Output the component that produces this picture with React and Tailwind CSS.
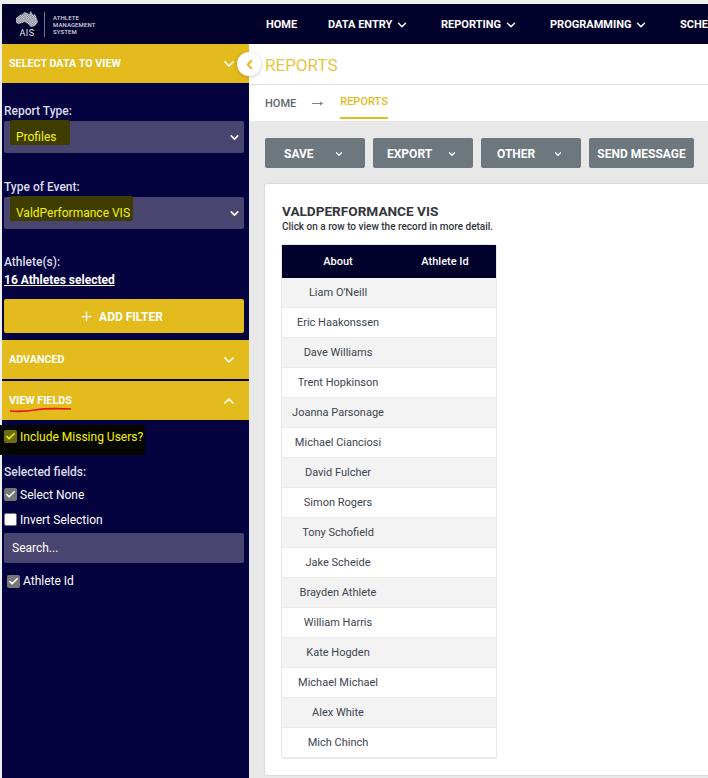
import React from 'react';
import { ChevronDown, ChevronUp, ChevronLeft, Plus, Check } from 'lucide-react';

const athletes = [
  "Liam O'Neill",
  'Eric Haakonssen',
  'Dave Williams',
  'Trent Hopkinson',
  'Joanna Parsonage',
  'Michael Cianciosi',
  'David Fulcher',
  'Simon Rogers',
  'Tony Schofield',
  'Jake Scheide',
  'Brayden Athlete',
  'William Harris',
  'Kate Hogden',
  'Michael Michael',
  'Alex White',
  'Mich Chinch',
];

const head = "font-['Roboto',sans-serif] font-bold";

const Logo = () => (
  <div className="flex items-center w-[247px] pl-[13px]">
    <div className="flex flex-col items-center w-[24px] pt-[1px]">
      <svg width="22" height="16" viewBox="0 0 22 16">
        <defs>
          <pattern id="chk" width="2.4" height="2.4" patternUnits="userSpaceOnUse">
            <rect width="2.4" height="2.4" fill="#55556f" />
            <rect width="1.2" height="1.2" fill="#ffffff" />
            <rect x="1.2" y="1.2" width="1.2" height="1.2" fill="#ffffff" />
          </pattern>
        </defs>
        <path d="M0 7 L4 4 L7 3 L8 1 L11 2 L13 3 L15 0 L17 4 L19 3 L21 8 L22 11 L19 15 L15 16 L12 13 L9 11 L3 13 L0 12 Z" fill="url(#chk)" />
      </svg>
      <span className="text-[9px] leading-[10px] tracking-[0.5px] text-[#e6e6ee] font-['Roboto',sans-serif] mt-[1px]">AIS</span>
    </div>
    <div className="w-px h-[25px] bg-[#77778f] ml-[5px] mr-[8px]"></div>
    <div className="text-[6px] leading-[7px] tracking-[0.1px] text-[#d8d8e4] font-['Roboto',sans-serif] font-medium">
      <div>ATHLETE</div>
      <div>MANAGEMENT</div>
      <div>SYSTEM</div>
    </div>
  </div>
);

const NavItem = ({ label, caret, className = '' }) => (
  <div className={`flex items-center gap-[3px] pt-[2px] text-white text-[11px] whitespace-nowrap ${head} ${className}`}>
    {label}
    {caret && <ChevronDown size={14} strokeWidth={2.5} />}
  </div>
);

const Section = ({ label, open, mark }) => (
  <div className="relative h-[39px] bg-[#e3bb1c] flex items-center justify-between pl-[7px] pr-[12px] text-white">
    <span className={`pt-[2px] text-[10.75px] ${head}`}>{label}</span>
    {open ? <ChevronUp size={16} strokeWidth={2.5} /> : <ChevronDown size={16} strokeWidth={2.5} />}
    {mark && (
      <svg className="absolute left-[7px] top-[26px]" width="64" height="6" viewBox="0 0 64 6">
        <path d="M1 4 Q14 5 26 3 T62 2" stroke="#e8131b" strokeWidth="1.6" fill="none" />
      </svg>
    )}
  </div>
);

const Select = ({ value, markWidth }) => (
  <div className="relative h-8 ml-[2px] mr-[5px] rounded-[2px] bg-[#4a4570] flex items-center justify-between pl-[12px] pr-[3px] text-[12px] font-['Roboto',sans-serif]">
    <div className="absolute left-[6px] top-[-1px] h-[25px] bg-[#3f3c00] rounded-[2px]" style={{ width: markWidth }}></div>
    <span className="relative text-[#f4f400]">{value}</span>
    <ChevronDown size={13} strokeWidth={3} className="text-white" />
  </div>
);

const Checkbox = ({ checked = true, color = 'bg-[#767676]', tick = 'text-white' }) => (
  <span className={`w-[13px] h-[13px] rounded-[2px] flex items-center justify-center shrink-0 ${checked ? color : 'bg-white border border-[#767676]'}`}>
    {checked && <Check size={11} strokeWidth={3.5} className={tick} />}
  </span>
);

const Sidebar = () => (
  <aside className="relative w-[247px] ml-[2px] bg-[#04023f] font-['Roboto',sans-serif] shrink-0">
    <Section label="SELECT DATA TO VIEW" />
    <div className="pt-[19px]">
      <div className="h-[19px] pl-[2px] text-[12px] leading-[18px] font-medium text-[#dcdcec]">Report Type:</div>
      <Select value="Profiles" markWidth={60} />
      <div className="mt-[25px] h-[19px] pl-[2px] text-[12px] leading-[18px] font-medium text-[#dcdcec]">Type of Event:</div>
      <Select value="ValdPerformance VIS" markWidth={123} />
      <div className="mt-[25px] pl-[2px] text-[12px] leading-[17px] font-medium text-[#dcdcec]">Athlete(s):</div>
      <div className="pl-[2px] text-[12px] leading-[18px] font-bold text-white underline">16 Athletes selected</div>
      <div className={`mt-[10px] ml-[2px] mr-[5px] h-[34px] pt-[1px] pr-[6px] rounded-[2px] bg-[#e3bb1c] flex items-center justify-center gap-[5px] text-white text-[12px] ${head}`}>
        <Plus size={15} strokeWidth={2} />
        ADD FILTER
      </div>
    </div>
    <div className="mt-[7px]">
      <Section label="ADVANCED" />
    </div>
    <div className="mt-[2px]">
      <Section label="VIEW FIELDS" open mark />
    </div>
    <div className="relative">
      <div className="absolute left-[-2px] top-[5px] w-[145px] h-[30px] bg-[#060600]"></div>
      <div className="relative pt-[10px] pl-[2px] h-[35px] flex items-start gap-[3px] text-[12px] text-[#f4f400]">
        <Checkbox color="bg-[#6c6c10]" tick="text-[#f4f400]" />
        <span className="leading-[14px]">Include Missing Users?</span>
      </div>
      <div className="mt-[8px] pl-[2px] text-[12px] leading-[18px] font-medium text-[#dcdcec]">Selected fields:</div>
      <div className="mt-[1px] pl-[2px] h-[25px] flex items-center gap-[3px] text-[12px] text-white">
        <Checkbox />
        Select None
      </div>
      <div className="pl-[2px] h-[25px] flex items-center gap-[3px] text-[12px] text-white">
        <Checkbox checked={false} />
        Invert Selection
      </div>
      <div className="mt-[1px] ml-[2px] mr-[5px] h-[30px] rounded-[2px] bg-[#4a4570] flex items-center pl-[8px] text-[12px] text-white">Search...</div>
      <div className="mt-[10px] pl-[5px] h-[16px] flex items-center gap-[3px] text-[12px] text-white">
        <Checkbox />
        Athlete Id
      </div>
    </div>
  </aside>
);

const ActionButton = ({ label, caret = true, width, pad }) => (
  <div
    className={`h-[30px] pt-[1px] rounded-[2px] bg-[#6c777e] flex items-center justify-center text-white text-[12px] ${head} ${width}`}
  >
    {caret ? (
      <div className={`flex items-center justify-between w-full ${pad}`}>
        <span>{label}</span>
        <ChevronDown size={10} strokeWidth={3} />
      </div>
    ) : (
      label
    )}
  </div>
);

const Table = () => (
  <div className="w-[216px] border border-[#e8e8e8] rounded-[2px] font-['Roboto',sans-serif] text-[11px]">
    <div className="h-[33px] pt-[1px] bg-[#02012b] text-white font-medium grid grid-cols-[112px_1fr] items-center text-center">
      <span>About</span>
      <span>Athlete Id</span>
    </div>
    {athletes.map((name, idx) => (
      <div
        key={name}
        className={`h-[30px] pt-[2px] grid grid-cols-[112px_1fr] items-center text-center text-[#3d4550] border-b border-[#ececec] ${idx % 2 === 0 ? 'bg-[#f3f3f3]' : 'bg-white'}`}
      >
        <span>{name}</span>
        <span></span>
      </div>
    ))}
  </div>
);

export default function App() {
  return (
    <div className="relative w-[708px] h-[778px] overflow-hidden bg-[#f0f0f0] flex flex-col">
      <div className="h-[4px] shrink-0"></div>
      <header className="h-[40px] shrink-0 ml-[2px] bg-[#02012b] flex items-center">
        <Logo />
        <NavItem label="HOME" className="ml-[17px] w-[62px]" />
        <NavItem label="DATA ENTRY" caret className="w-[113px]" />
        <NavItem label="REPORTING" caret className="w-[109px]" />
        <NavItem label="PROGRAMMING" caret className="w-[130px]" />
        <NavItem label="SCHE" />
      </header>
      <div className="flex flex-1 min-h-0">
        <Sidebar />
        <main className="flex-1 min-w-0 bg-[#e8e8e8]">
          <div className="h-[41px] pt-[3px] bg-white border-b border-[#e4e4e4] flex items-center pl-[16px]">
            <span className="text-[17px] font-['Roboto',sans-serif] text-[#e8c544]">REPORTS</span>
          </div>
          <div className="h-[36px] bg-white flex items-stretch pl-[16px] text-[11px] font-['Roboto',sans-serif] font-medium">
            <span className="flex items-center pt-[2px] text-[#5d6670]">HOME</span>
            <span className="flex items-center ml-[16px] mr-[17px]">
              <svg width="11" height="5" viewBox="0 0 11 5">
                <path d="M0 2.5 H10 M8 1 L10.5 2.5 L8 4" stroke="#707880" strokeWidth="0.9" fill="none" />
              </svg>
            </span>
            <span className="flex items-center pt-[2px] text-[#e3bb1c] border-b-2 border-[#e3bb1c] h-[34px]">REPORTS</span>
          </div>
          <div className="pt-[17px] pl-[16px] flex gap-2">
            <ActionButton label="SAVE" width="w-[100px]" pad="pl-[19px] pr-[21px]" />
            <ActionButton label="EXPORT" width="w-[100px]" pad="pl-[14px] pr-[16px]" />
            <ActionButton label="OTHER" width="w-[100px]" pad="pl-[16px] pr-[18px]" />
            <ActionButton label="SEND MESSAGE" caret={false} width="w-[105px]" />
          </div>
          <div className="mt-[16px] ml-[16px] w-[460px] h-[591px] bg-white rounded-[2px] shadow-[0_0_2px_rgba(0,0,0,0.2)] pt-[20px] pl-[16px]">
            <div className={`pl-[1px] text-[13.6px] leading-[15px] text-[#33363c] ${head}`}>VALDPERFORMANCE VIS</div>
            <div className="pl-[1px] text-[10px] leading-[15px] font-['Roboto',sans-serif] font-medium text-[#33363c] mb-[10px]">
              Click on a row to view the record in more detail.
            </div>
            <Table />
          </div>
        </main>
      </div>
      <div className="absolute left-[237px] top-[52px] w-[24px] h-[24px] rounded-full bg-white shadow-[0_1px_4px_rgba(0,0,0,0.2)] flex items-center justify-center text-[#e3bb1c]">
        <ChevronLeft size={15} strokeWidth={3} />
      </div>
    </div>
  );
}
